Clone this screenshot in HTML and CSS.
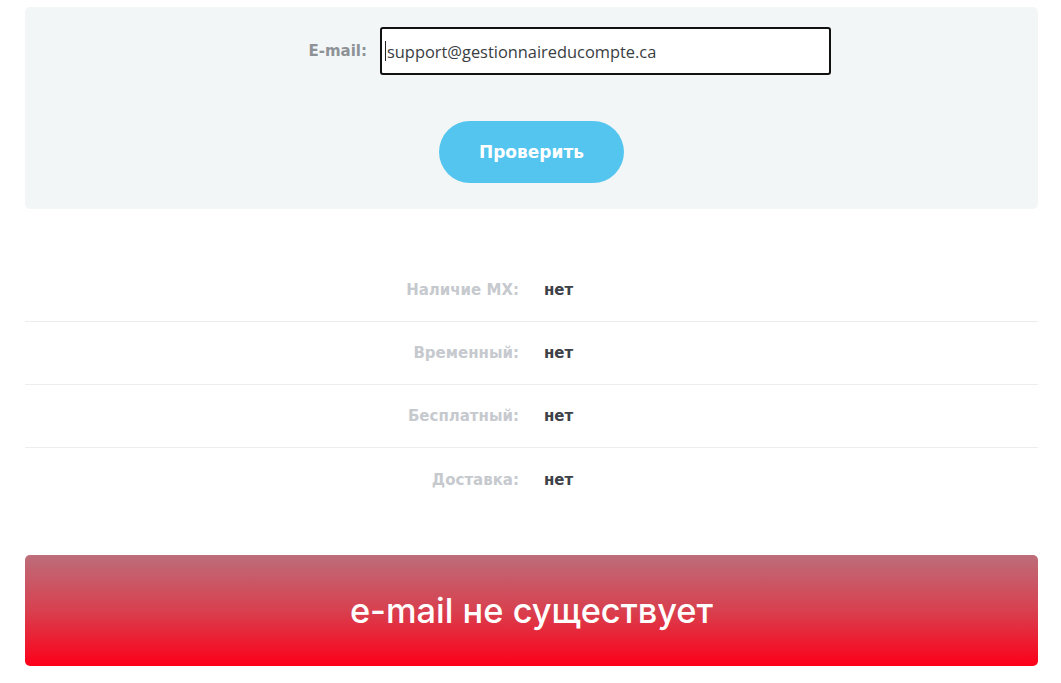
FILE: index.html
```html
<!DOCTYPE html>
<html lang="ru">
<head>
<meta charset="utf-8">
<title>Проверка e-mail</title>
<link rel="stylesheet" href="styles.css">
</head>
<body>
<div class="page">
  <form class="panel">
    <div class="field">
      <label class="field-label" for="email">E-mail:</label>
      <div class="input"><span class="caret"></span>support@gestionnaireducompte.ca</div>
    </div>
    <button type="button" class="btn">Проверить</button>
  </form>

  <div class="results">
    <div class="row"><div class="key">Наличие MX:</div><div class="val">нет</div></div>
    <div class="row"><div class="key">Временный:</div><div class="val">нет</div></div>
    <div class="row"><div class="key">Бесплатный:</div><div class="val">нет</div></div>
    <div class="row"><div class="key">Доставка:</div><div class="val">нет</div></div>
  </div>

  <div class="banner">e-mail не существует</div>
</div>
</body>
</html>
```
FILE: styles.css
```css
html, body {
  margin: 0;
  padding: 0;
  background: #ffffff;
}
.page {
  padding: 7px 23px 0 25px;
  font-family: "DejaVu Sans", sans-serif;
}
.panel {
  background: #f3f6f7;
  border-radius: 5px;
  height: 202px;
  box-sizing: border-box;
  padding-top: 20px;
  display: flex;
  flex-direction: column;
  align-items: center;
}
.field {
  align-self: stretch;
  display: grid;
  grid-template-columns: 342px 451px 1fr;
  column-gap: 13px;
  align-items: center;
}
.field-label {
  text-align: right;
  font-weight: 700;
  font-size: 15px;
  color: #8d9296;
}
.input {
  width: 451px;
  height: 48px;
  box-sizing: border-box;
  border: 2px solid #111111;
  border-radius: 3px;
  background: #ffffff;
  font-family: "Open Sans", sans-serif;
  font-size: 16.4px;
  color: #3a3d42;
  display: flex;
  align-items: center;
  padding-left: 3px;
}
.caret {
  width: 1px;
  height: 20px;
  background: #222;
  margin-right: 1px;
}
.btn {
  margin-top: 46px;
  width: 185px;
  height: 62px;
  border: none;
  border-radius: 31px;
  background: #54c5ee;
  color: #ffffff;
  font-family: "DejaVu Sans", sans-serif;
  font-weight: 700;
  font-size: 17px;
}
.results {
  margin-top: 50px;
}
.row {
  display: grid;
  grid-template-columns: 1fr 1fr;
  column-gap: 25px;
  height: 63px;
  align-items: center;
  border-bottom: 1px solid #ebedef;
  box-sizing: border-box;
  font-weight: 700;
  font-size: 15px;
}
.row:last-child {
  border-bottom: none;
}
.key {
  text-align: right;
  color: #c6c9ce;
}
.val {
  color: #3d4148;
}
.banner {
  margin-top: 44px;
  height: 111px;
  border-radius: 5px;
  background: linear-gradient(to bottom, #bd6d7a 0%, #d8404f 50%, #fd0019 100%);
  color: #ffffff;
  font-family: "Inter", sans-serif;
  font-weight: 500;
  font-size: 34.4px;
  display: flex;
  align-items: center;
  justify-content: center;
}
```
